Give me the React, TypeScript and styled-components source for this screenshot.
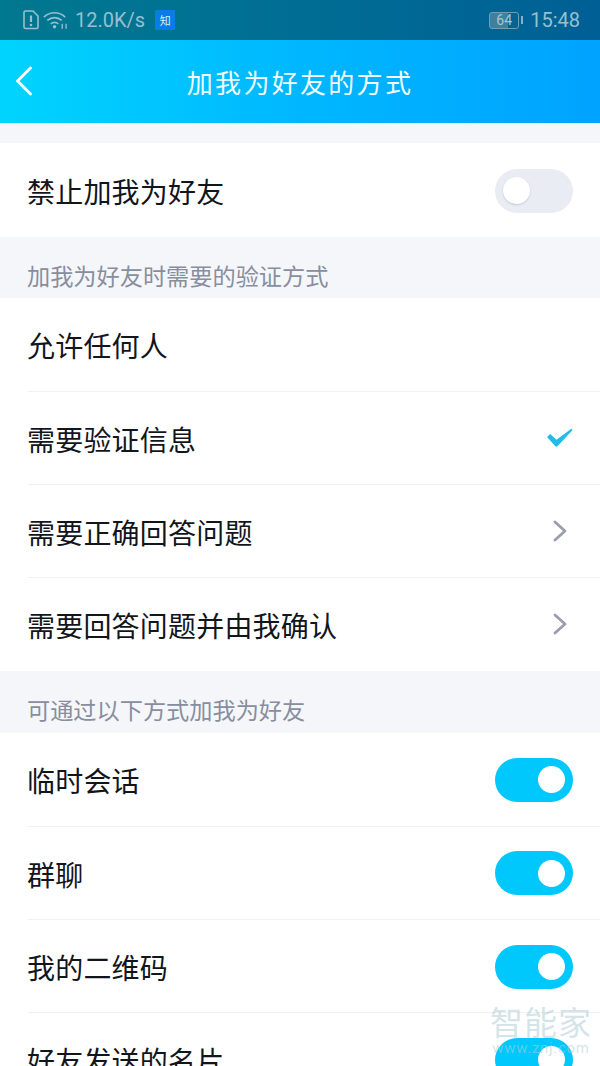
import React from "react";
import styled, { createGlobalStyle } from "styled-components";

const Global = createGlobalStyle`
  html, body { margin: 0; padding: 0; background: #f5f6fa; }
  * { box-sizing: border-box; }
  body { font-family: "Noto Sans CJK SC", "Noto Sans", sans-serif; }
`;

const Page = styled.div`
  position: relative;
  width: 600px;
  height: 1066px;
  overflow: hidden;
  background: #f5f6fa;
`;

const StatusBar = styled.div`
  height: 40px;
  display: flex;
  align-items: center;
  padding: 0 20px 0 22px;
  background: linear-gradient(90deg, #00788f 0%, #006f94 45%, #005f95 100%);
  color: #94c0cf;
  font-family: Roboto, sans-serif;
  font-size: 20px;
`;

const StatusLeft = styled.div`
  display: flex;
  align-items: center;
  gap: 3px;
  flex: 1;
`;

const Speed = styled.span`
  margin-left: 4px;
`;

const ZhiBadge = styled.span`
  width: 20px;
  height: 20px;
  margin-left: 7px;
  background: #0a7ce8;
  color: #dcecf8;
  font-size: 11px;
  line-height: 20px;
  text-align: center;
  font-family: "Noto Sans CJK SC", sans-serif;
`;

const Battery = styled.span`
  width: 30px;
  height: 17px;
  border: 1px solid #6d9fb5;
  border-radius: 3px;
  background: linear-gradient(90deg, #3f7f9f 0 64%, transparent 64%);
  font-size: 14px;
  line-height: 15px;
  text-align: center;
  color: #a2c8d8;
  margin-right: 2px;
`;

const BatteryCap = styled.span`
  width: 2px;
  height: 8px;
  background: #86b2c6;
  margin-right: 7px;
`;

const Time = styled.span`
  font-size: 20px;
`;

const Header = styled.header`
  position: relative;
  height: 83px;
  display: flex;
  align-items: center;
  justify-content: center;
  background: linear-gradient(90deg, #00d4fe 0%, #00b7ff 50%, #00a3ff 100%);
  color: #f2fbff;
  font-size: 26px;
  letter-spacing: 2.3px;
`;

const BackIcon = styled.svg`
  position: absolute;
  left: 13px;
  top: 25px;
`;

const Spacer = styled.div`
  height: 20px;
`;

const Group = styled.section`
  background: #ffffff;
`;

const Row = styled.div<{ $tall?: boolean }>`
  height: ${(p) => (p.$tall ? "94px" : "93.25px")};
  margin-left: 28px;
  padding-right: 27px;
  display: flex;
  align-items: center;
  justify-content: space-between;
  & + & {
    border-top: 1px solid #f0f1f4;
  }
`;

const RowText = styled.span`
  padding-top: 2px;
  margin-left: -1px;
  color: #12151c;
  font-size: 28px;
  letter-spacing: 0.2px;
  line-height: 1;
`;

const SectionLabel = styled.div<{ $height: number }>`
  height: ${(p) => p.$height}px;
  padding: 23px 0 0 27px;
  color: #888e9e;
  font-size: 23.2px;
  line-height: 31px;
`;

const Track = styled.span<{ $on: boolean }>`
  width: 78px;
  height: 44px;
  margin-top: 1px;
  border-radius: 22px;
  background: ${(p) => (p.$on ? "#00c8fd" : "#e9ecf3")};
  display: flex;
  align-items: center;
  justify-content: ${(p) => (p.$on ? "flex-end" : "flex-start")};
  padding: 0 8px;
`;

const Knob = styled.span<{ $on: boolean }>`
  width: 27px;
  height: 27px;
  border-radius: 50%;
  background: #fff;
  box-shadow: ${(p) => (p.$on ? "none" : "0 1px 2px rgba(120,130,150,.3)")};
`;

const ChevronIcon = styled.svg`
  margin-right: 6px;
`;

const Watermark = styled.div`
  position: absolute;
  left: 489px;
  top: 1002px;
  width: 104px;
  color: rgba(176, 205, 214, 0.55);
  text-align: center;
  pointer-events: none;
`;

const WatermarkName = styled.div`
  font-size: 33px;
  line-height: 38px;
  letter-spacing: 1px;
`;

const WatermarkUrl = styled.div`
  font-family: Roboto, sans-serif;
  font-size: 15px;
  line-height: 17px;
  letter-spacing: 0.7px;
`;

const Toggle = ({ on }: { on: boolean }) => (
  <Track $on={on}>
    <Knob $on={on} />
  </Track>
);

const Chevron = () => (
  <ChevronIcon width="14" height="22" viewBox="0 0 14 22" fill="none">
    <path d="M2 2 L12 11 L2 20" stroke="#9a9dae" strokeWidth="2.8" strokeLinecap="round" strokeLinejoin="round" />
  </ChevronIcon>
);

const Check = () => (
  <svg width="26" height="20" viewBox="0 0 26 20" fill="none">
    <path d="M0 9 L3.2 6 L9.5 11.8 L24.3 0.8 L25.6 2 L10.2 18.6 L8.6 18.6 Z" fill="#1fbde9" />
  </svg>
);

export default function App() {
  return (
    <Page>
      <Global />
      <StatusBar>
        <StatusLeft>
          <svg width="18" height="20" viewBox="0 0 18 20" fill="none">
            <path d="M2 2.5 a1.5 1.5 0 0 1 1.5 -1.5 H11 L16 6 V17 a1.5 1.5 0 0 1 -1.5 1.5 H3.5 A1.5 1.5 0 0 1 2 17 Z" stroke="#94c0cf" strokeWidth="1.6" />
            <path d="M9 5.5 V12" stroke="#94c0cf" strokeWidth="2.2" />
            <circle cx="9" cy="15" r="1.3" fill="#94c0cf" />
          </svg>
          <svg width="25" height="20" viewBox="0 0 26 20" fill="none">
            <path d="M1 7 C7 1 17 1 23 7" stroke="#94c0cf" strokeWidth="1.7" />
            <path d="M4.5 10.5 C9 6.5 15 6.5 19.5 10.5" stroke="#94c0cf" strokeWidth="1.7" />
            <path d="M8 14 C10.5 12 13.5 12 16 14" stroke="#94c0cf" strokeWidth="1.7" />
            <circle cx="12" cy="17" r="1.8" fill="#94c0cf" />
            <path d="M20 14 v5 M24 14 v5" stroke="#94c0cf" strokeWidth="1.4" />
          </svg>
          <Speed>12.0K/s</Speed>
          <ZhiBadge>知</ZhiBadge>
        </StatusLeft>
        <Battery>64</Battery>
        <BatteryCap />
        <Time>15:48</Time>
      </StatusBar>
      <Header>
        <BackIcon width="22" height="32" viewBox="0 0 22 32" fill="none">
          <path d="M17.5 3 L4.5 16 L17.5 29" stroke="#f2fbff" strokeWidth="3" strokeLinecap="round" strokeLinejoin="round" />
        </BackIcon>
        加我为好友的方式
      </Header>
      <Spacer />
      <Group>
        <Row $tall>
          <RowText>禁止加我为好友</RowText>
          <Toggle on={false} />
        </Row>
      </Group>
      <SectionLabel $height={60.6}>加我为好友时需要的验证方式</SectionLabel>
      <Group>
        <Row>
          <RowText>允许任何人</RowText>
        </Row>
        <Row>
          <RowText>需要验证信息</RowText>
          <Check />
        </Row>
        <Row>
          <RowText>需要正确回答问题</RowText>
          <Chevron />
        </Row>
        <Row>
          <RowText>需要回答问题并由我确认</RowText>
          <Chevron />
        </Row>
      </Group>
      <SectionLabel $height={62}>可通过以下方式加我为好友</SectionLabel>
      <Group>
        <Row>
          <RowText>临时会话</RowText>
          <Toggle on />
        </Row>
        <Row>
          <RowText>群聊</RowText>
          <Toggle on />
        </Row>
        <Row>
          <RowText>我的二维码</RowText>
          <Toggle on />
        </Row>
        <Row>
          <RowText>好友发送的名片</RowText>
          <Toggle on />
        </Row>
      </Group>
      <Watermark>
        <WatermarkName>智能家</WatermarkName>
        <WatermarkUrl>www.znj.com</WatermarkUrl>
      </Watermark>
    </Page>
  );
}
